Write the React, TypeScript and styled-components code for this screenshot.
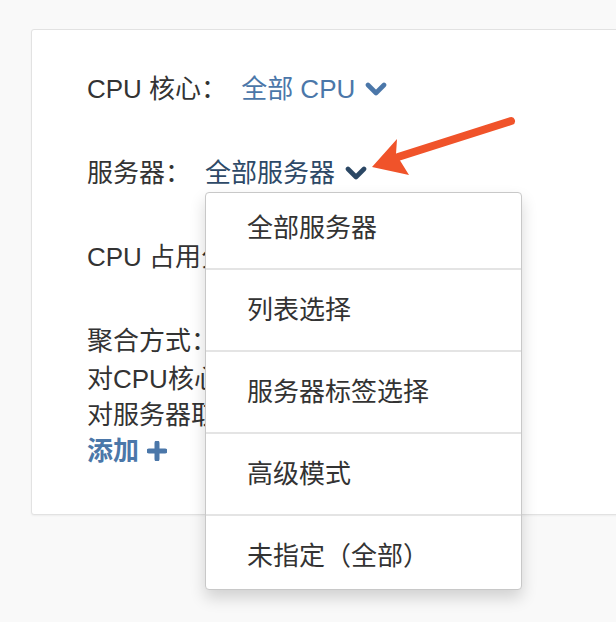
import * as React from 'react'
import styled, { createGlobalStyle } from 'styled-components'

const GlobalStyle = createGlobalStyle`
	html, body {
		margin: 0;
		padding: 0;
		background: #f9f9f9;
		overflow: hidden;
	}
	body {
		font-family: "Liberation Sans", "Noto Sans CJK SC", sans-serif;
		color: #333;
	}
`

const Page = styled.div`
	width: 616px;
	height: 622px;
	padding-top: 29px;
	box-sizing: border-box;
	position: relative;
	overflow: hidden;
`

const Card = styled.div`
	margin-left: 31px;
	width: 620px;
	box-sizing: border-box;
	background: #fff;
	border: 1px solid #e2e2e2;
	border-radius: 3px;
	box-shadow: 0 1px 2px rgba(0, 0, 0, 0.05);
	padding: 41px 0 45px 55px;
	display: flex;
	flex-direction: column;
	gap: 48px;
`

const Row = styled.div`
	display: flex;
	align-items: center;
	font-size: 26px;
	line-height: 36px;
	white-space: nowrap;
`

const Label = styled.span`
	color: #333;
	margin-right: 14px;
`

const Value = styled.span<{ $active?: boolean }>`
	position: relative;
	display: inline-flex;
	align-items: center;
	gap: 10px;
	color: ${({ $active }) => ($active ? '#2d4967' : '#4b77a9')};
	cursor: pointer;
`

const Block = styled.div`
	display: flex;
	flex-direction: column;
	font-size: 26px;
	line-height: 36px;
	white-space: nowrap;
`

const Line = styled.div<{ $gapTop?: number }>`
	margin-top: ${({ $gapTop }) => $gapTop || 0}px;
`

const AddLink = styled.span`
	display: inline-flex;
	align-items: center;
	gap: 8px;
	color: #4b77a9;
	font-weight: bold;
`

const Menu = styled.ul`
	position: absolute;
	top: calc(100% + 1px);
	left: 0;
	width: 317px;
	margin: 0;
	padding: 0;
	list-style: none;
	background: #fff;
	border: 1px solid #c8c8c8;
	border-radius: 4px;
	box-shadow: 0 8px 16px rgba(0, 0, 0, 0.16);
	box-sizing: border-box;
	z-index: 5;
`

const MenuItem = styled.li`
	padding: 22px 0 22px 41px;
	font-size: 26px;
	line-height: 36px;
	color: #333;
	border-top: 2px solid #e4e4e4;

	&:first-child {
		border-top: none;
		padding-top: 17px;
	}
	&:last-child {
		padding-bottom: 15px;
	}
`

const Annotation = styled.svg`
	position: absolute;
	left: 0;
	top: 0;
	pointer-events: none;
	z-index: 10;
`

function Chevron({ color }: { color: string }) {
	return (
		<svg width="22" height="14" viewBox="0 0 22 14">
			<polyline
				points="3,3 11,11 19,3"
				fill="none"
				stroke={color}
				strokeWidth="4.6"
				strokeLinecap="round"
				strokeLinejoin="round"
			/>
		</svg>
	)
}

function Plus() {
	return (
		<svg width="20" height="20" viewBox="0 0 20 20">
			<path d="M10 2v16M2 10h16" stroke="#4b77a9" strokeWidth="5" strokeLinecap="round" />
		</svg>
	)
}

const menuItems = ['全部服务器', '列表选择', '服务器标签选择', '高级模式', '未指定（全部）']

export default function App() {
	return (
		<Page>
			<GlobalStyle />
			<Card>
				<Row>
					<Label>CPU 核心：</Label>
					<Value>
						全部 CPU
						<Chevron color="#4b77a9" />
					</Value>
				</Row>
				<Row>
					<Label>服务器：</Label>
					<Value $active>
						全部服务器
						<Chevron color="#2b4764" />
						<Menu>
							{menuItems.map((item) => (
								<MenuItem key={item}>{item}</MenuItem>
							))}
						</Menu>
					</Value>
				</Row>
				<Row>
					<Label>CPU 占用分位：</Label>
				</Row>
				<Block>
					<Line>聚合方式：</Line>
					<Line $gapTop={2}>对CPU核心取平均值</Line>
					<Line>对服务器取最大值</Line>
					<Line>
						<AddLink>
							添加
							<Plus />
						</AddLink>
					</Line>
				</Block>
			</Card>
			<Annotation width="616" height="622">
				<line x1="511" y1="121" x2="398" y2="157" stroke="#f0532a" strokeWidth="8" strokeLinecap="round" />
				<polygon points="372,167 397,139 396,154 409,175" fill="#f0532a" />
			</Annotation>
		</Page>
	)
}
